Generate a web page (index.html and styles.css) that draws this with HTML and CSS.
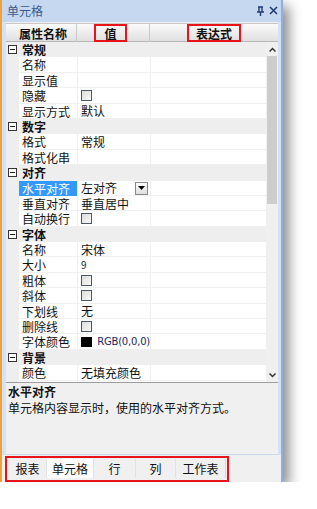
FILE: index.html
```html
<!DOCTYPE html>
<html>
<head>
<meta charset="utf-8">
<link rel="stylesheet" href="styles.css">
</head>
<body>
<div class="win">
  <div class="titlebar">
    <span class="title">单元格</span>
    <span class="tb-icons">
      <svg width="9" height="10" viewBox="0 0 9 10"><path d="M2 1h5M3 1v5M6 1v5M1 6h7M4.5 6v4" stroke="#1f3d73" stroke-width="1.4" fill="none"/></svg>
      <svg width="9" height="9" viewBox="0 0 9 9"><path d="M1 1l7 7M8 1l-7 7" stroke="#1f3d73" stroke-width="1.6"/></svg>
    </span>
  </div>
  <div class="body">
    <div class="head">
      <div class="h h-name">属性名称</div>
      <div class="h h-val"><span class="redbox rb-val">值</span></div>
      <div class="h h-exp"><span class="redbox rb-exp">表达式</span></div>
    </div>
    <div class="gridwrap">
      <div class="rows">
        <div class="row cat"><div class="g"><span class="exp"></span></div><div class="n">常规</div><div class="v"></div><div class="e"></div></div>
        <div class="row"><div class="g"></div><div class="n">名称</div><div class="v"></div><div class="e"></div></div>
        <div class="row"><div class="g"></div><div class="n">显示值</div><div class="v"></div><div class="e"></div></div>
        <div class="row"><div class="g"></div><div class="n">隐藏</div><div class="v"><span class="cb"></span></div><div class="e"></div></div>
        <div class="row"><div class="g"></div><div class="n">显示方式</div><div class="v">默认</div><div class="e"></div></div>
        <div class="row cat"><div class="g"><span class="exp"></span></div><div class="n">数字</div><div class="v"></div><div class="e"></div></div>
        <div class="row"><div class="g"></div><div class="n">格式</div><div class="v">常规</div><div class="e"></div></div>
        <div class="row"><div class="g"></div><div class="n">格式化串</div><div class="v"></div><div class="e"></div></div>
        <div class="row cat"><div class="g"><span class="exp"></span></div><div class="n">对齐</div><div class="v"></div><div class="e"></div></div>
        <div class="row sel"><div class="g"></div><div class="n">水平对齐</div><div class="v">左对齐<span class="dd"><svg width="7" height="4" viewBox="0 0 7 4"><path d="M0 0h7L3.5 4z" fill="#000"/></svg></span></div><div class="e"></div></div>
        <div class="row"><div class="g"></div><div class="n">垂直对齐</div><div class="v">垂直居中</div><div class="e"></div></div>
        <div class="row"><div class="g"></div><div class="n">自动换行</div><div class="v"><span class="cb"></span></div><div class="e"></div></div>
        <div class="row cat"><div class="g"><span class="exp"></span></div><div class="n">字体</div><div class="v"></div><div class="e"></div></div>
        <div class="row"><div class="g"></div><div class="n">名称</div><div class="v">宋体</div><div class="e"></div></div>
        <div class="row"><div class="g"></div><div class="n">大小</div><div class="v small">9</div><div class="e"></div></div>
        <div class="row"><div class="g"></div><div class="n">粗体</div><div class="v"><span class="cb"></span></div><div class="e"></div></div>
        <div class="row"><div class="g"></div><div class="n">斜体</div><div class="v"><span class="cb"></span></div><div class="e"></div></div>
        <div class="row"><div class="g"></div><div class="n">下划线</div><div class="v">无</div><div class="e"></div></div>
        <div class="row"><div class="g"></div><div class="n">删除线</div><div class="v"><span class="cb"></span></div><div class="e"></div></div>
        <div class="row"><div class="g"></div><div class="n">字体颜色</div><div class="v"><span class="swatch"></span><span class="rgb">RGB(0,0,0)</span></div><div class="e"></div></div>
        <div class="row cat"><div class="g"><span class="exp"></span></div><div class="n">背景</div><div class="v"></div><div class="e"></div></div>
        <div class="row"><div class="g"></div><div class="n">颜色</div><div class="v">无填充颜色</div><div class="e"></div></div>
        <div class="row"><div class="g"></div><div class="n">图片</div><div class="v"></div><div class="e"></div></div>
      </div>
      <div class="sbar">
        <div class="arrow"><svg width="7" height="5" viewBox="0 0 7 5"><path d="M0.5 4.5L3.5 1.5L6.5 4.5" stroke="#333" stroke-width="1.5" fill="none"/></svg></div>
        <div class="thumb"></div>
        <div class="track"></div>
        <div class="arrow"><svg width="7" height="5" viewBox="0 0 7 5"><path d="M0.5 0.5L3.5 3.5L6.5 0.5" stroke="#333" stroke-width="1.5" fill="none"/></svg></div>
      </div>
    </div>
    <div class="desc">
      <div class="desc-t">水平对齐</div>
      <div class="desc-d">单元格内容显示时，使用的水平对齐方式。</div>
    </div>
  </div>
  <div class="tabs">
    <div class="tabbox">
      <div class="tab t1">报表</div>
      <div class="tab t2 active">单元格</div>
      <div class="tab t3">行</div>
      <div class="tab t4">列</div>
      <div class="tab t5">工作表</div>
    </div>
  </div>
</div>
</body>
</html>
```

FILE: styles.css
```css
* { box-sizing: border-box; }
html, body { margin: 0; padding: 0; background: #fff; }
body {
  font-family: "Noto Sans CJK SC", "Noto Sans", sans-serif;
  font-size: 12px;
  color: #111;
}
.win {
  width: 283px;
  height: 482px;
  background: #f0f0f0;
  border-left: 2px solid #f0a23a;
  border-right: 2px solid #8fb0dc;
  box-shadow: 6px 6px 12px rgba(0,0,0,0.45);
  display: flex;
  flex-direction: column;
}
.titlebar {
  height: 22px;
  background: #c6d8ef;
  display: flex;
  align-items: center;
  justify-content: space-between;
  padding: 0 3px 1px 5px;
}
.title { color: #3a5a8c; font-size: 12px; line-height: 21px; }
.tb-icons { display: flex; gap: 4px; align-items: center; }
.body {
  background: #f0f0f0;
  border-left: 4px solid #d5e2f3;
  border-right: 3px solid #d5e2f3;
  padding: 0;
  display: flex;
  flex-direction: column;
  height: 434px;
}
.head {
  display: grid;
  grid-template-columns: 71px 73px 1fr;
  height: 19px;
  margin-top: 1px;
  background: linear-gradient(#fafafa, #e0e0e0);
  border-top: 1px solid #c8c8c8;
  border-bottom: 1px solid #b8b8b8;
}
.h {
  display: flex;
  align-items: center;
  justify-content: center;
  font-weight: bold;
  border-right: 1px solid #c8c8c8;
  line-height: 17px;
}
.h-name { padding-left: 4px; }
.h-exp { border-right: none; padding-left: 4px; }
.redbox {
  border: 2px solid #e8141c;
  height: 18px;
  display: flex;
  align-items: center;
  justify-content: center;
}
.rb-val { width: 33px; margin-left: -5px; }
.rb-exp { width: 54px; margin-left: -4px; }
.gridwrap {
  display: flex;
  height: 341px;
  overflow: hidden;
  border-bottom: 1px solid #9c9c9c;
}
.rows { flex: 1; overflow: hidden; background: #fff; }
.row {
  display: grid;
  grid-template-columns: 13px 58px 73px 1fr;
  height: 15.4px;
  line-height: 15px;
}
.row > div { overflow: hidden; white-space: nowrap; }
.row .g { background: #eeeeee; }
.row .n { padding-left: 3px; border-bottom: 1px solid #f0f0f0; }
.row .v { padding-left: 3px; border-bottom: 1px solid #f0f0f0; border-left: 1px solid #f0f0f0; display: flex; align-items: center; position: relative; }
.row .e { border-bottom: 1px solid #f0f0f0; border-left: 1px solid #f0f0f0; }
.row.cat > div { background: #eeeeee; border-color: #eeeeee; }
.row.cat .n { font-weight: bold; }
.exp {
  display: block;
  width: 9px; height: 9px;
  margin: 3px 0 0 2px;
  border: 1px solid #333;
  position: relative;
  background: #fff;
}
.exp::after {
  content: "";
  position: absolute;
  left: 1px; top: 3px;
  width: 5px; height: 1px;
  background: #222;
}
.row.sel .n { background: #3399ff; color: #fff; border-color: #3399ff; }
.dd {
  position: absolute;
  right: 2px; top: 1px;
  width: 13px; height: 13px;
  border: 1px solid #8a8a8a;
  background: linear-gradient(#fdfdfd, #dedede);
  display: flex; align-items: center; justify-content: center;
}
.cb {
  width: 11px; height: 11px;
  border: 1px solid #4a5868;
  background: linear-gradient(135deg, #dcdcdc, #fafafa);
  display: inline-block;
}
.small { font-size: 10px; color: #222; }
.swatch { width: 13px; height: 10px; background: #000; display: inline-block; margin-right: 5px; }
.rgb { font-size: 10px; color: #1c2660; font-family: "DejaVu Sans", sans-serif; letter-spacing: -0.2px; }
.sbar {
  width: 12px;
  background: #f0f0f0;
  display: flex;
  flex-direction: column;
}
.arrow { height: 14px; display: flex; align-items: center; justify-content: center; }
.thumb { height: 148px; background: #cdcdcd; margin: 0 1px; }
.track { flex: 1; }
.desc {
  flex: 1;
  padding: 1px 0 0 2px;
  border-bottom: 1px solid #c9d8ec;
}
.desc-t { font-weight: bold; line-height: 16px; }
.desc-d { line-height: 16px; }
.tabs {
  flex: 1;
  background: #f0f0f0;
  padding: 1px 0 0 3px;
}
.tabbox {
  width: 224px;
  height: 26px;
  border: 2px solid #e8141c;
  display: flex;
  padding: 1px 1px 2px 2px;
}
.tab {
  display: flex;
  align-items: center;
  justify-content: center;
  border-right: 1px solid #e2e2e2;
  height: 100%;
}
.t1 { width: 38px; }
.t2 { width: 47px; }
.t3 { width: 42px; }
.t4 { width: 40px; }
.t5 { width: 50px; border-right: 1px solid #d8d8d8; }
.tab.active { background: #fff; }
```
